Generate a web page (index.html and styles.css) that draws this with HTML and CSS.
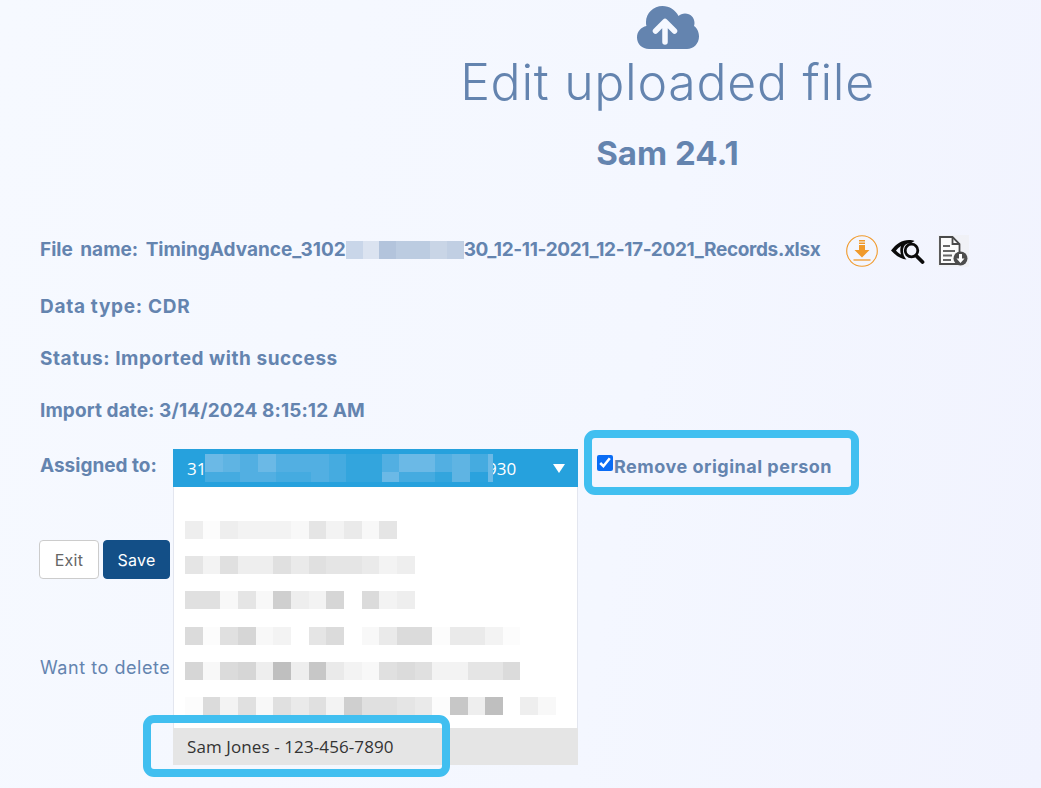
FILE: index.html
```html
<!DOCTYPE html>
<html lang="en">
<head>
<meta charset="utf-8">
<title>Edit uploaded file</title>
<link rel="stylesheet" href="styles.css">
</head>
<body>
<main class="page">
  <header class="head">
    <svg class="cloud" viewBox="0 0 62 46" width="62" height="46" aria-hidden="true">
      <path fill="#6484af" d="M12 44C5 44 0 39 0 32.500C0 26.500 4 22 9.500 21C9 19.500 9 18.500 9 17C9 8 16.500 1 25.500 1C32.500 1 38.500 5 41.500 11C43 9.500 45.500 8.500 48 8.500C53.500 8.500 57.500 12.500 57.500 18C57.500 19 57.300 20 57 21C60 23 62 27 62 31.500C62 38.500 56.500 44 50 44Z"/>
      <path fill="none" stroke="#f5f8ff" stroke-width="5.500" stroke-linecap="round" stroke-linejoin="round" d="M28 37V17.500M18.500 26L28 16.500L37.500 26"/>
    </svg>
    <h1 class="title">Edit uploaded file</h1>
    <h2 class="subtitle">Sam 24.1</h2>
  </header>

  <section class="details">
    <div class="file-row">
      <p class="info"><span class="fit-prefix">File name: TimingAdvance_3102</span><span class="redact"><i class="r1"></i><i class="r2"></i><i class="r3"></i><i class="r4"></i><i class="r4"></i><i class="r5"></i><i class="r6"></i></span><span class="fit-suffix">30_12-11-2021_12-17-2021_Records.xlsx</span></p>
      <div class="file-icons">
        <svg viewBox="0 0 32 32" width="32" height="32" aria-hidden="true">
          <circle cx="16" cy="16" r="15.300" fill="none" stroke="#f09a2c" stroke-width="1.100"/>
          <path fill="#f09a2c" d="M13 5h6v1.500h-6zM13 7.500h6V9h-6zM13 10h6v5h4.500L16 22.500 8.500 15H13z"/>
          <path fill="none" stroke="#f09a2c" stroke-width="1.300" d="M7.500 25h17"/>
        </svg>
        <svg viewBox="0 0 34 26" width="34" height="26" aria-hidden="true">
          <path fill="#0b0b0b" d="M0 12.500C5 6 11 2 18 2C20 2 22 2.300 23.500 3L20 5.200C14 4.500 12 9 12 13C12 16 13 19 15.500 21.500C10 21 5 18 0 12.500ZM5 12.500C6.500 14.200 8 15.500 10 16.500C9 13.500 9 10.500 10 8C8 9.300 6.500 10.800 5 12.500Z"/>
          <circle cx="20.500" cy="12.500" r="6.300" fill="none" stroke="#0b0b0b" stroke-width="2.800"/>
          <path stroke="#0b0b0b" stroke-width="3.800" stroke-linecap="round" d="M25.500 18l6 6"/>
        </svg>
        <svg class="doc" viewBox="0 0 31 32" width="31" height="32" aria-hidden="true">
          <rect width="31" height="32" fill="#f0f1f6"/>
          <path fill="#fbfbfb" stroke="#4a4a4a" stroke-width="1.800" d="M2 2h12.500l7 7v20H2z"/>
          <path fill="none" stroke="#4a4a4a" stroke-width="1.800" d="M14.500 2v7h7"/>
          <path stroke="#666" stroke-width="2.200" d="M5 11h7M5 16h12M5 20.500h9M5 25h8"/>
          <circle cx="22.500" cy="23.500" r="7" fill="#4d4d4d"/>
          <path fill="#fff" d="M21 19h3v4.500h2.500L22.500 28l-4-4.500H21z"/>
        </svg>
      </div>
    </div>
    <p class="info status-data">Data type: CDR</p>
    <p class="info status-state">Status: Imported with success</p>
    <p class="info status-date">Import date: 3/14/2024 8:15:12 AM</p>
  </section>

  <section class="assign-row">
    <p class="info assign-label">Assigned to:</p>
    <div class="select">
      <div class="select-bar">
        <span class="select-start">31</span>
        <span class="select-end">930</span>
        <span class="caret"></span>
        <div class="blur-bar">
          <div class="blur-row tall"><i class="b5"></i><i class="b4"></i><i class="b3"></i><i class="b5"></i><i class="b3"></i><i class="b3"></i><i class="b3"></i><i class="b2"></i><i class="b1"></i><i class="b1"></i><i class="b3"></i><i class="b5"></i><i class="b5"></i><i class="b3"></i><i class="b4"></i><i class="b2"></i><i class="sliver b5"></i></div>
          <div class="blur-row short"><i class="b2"></i><i class="b2"></i><i class="b3"></i><i class="b3"></i><i class="b2"></i><i class="b2"></i><i class="b3"></i><i class="b2"></i><i class="b1"></i><i class="b1"></i><i class="b5"></i><i class="b2"></i><i class="b2"></i><i class="b1"></i><i class="b4"></i><i class="b0"></i><i class="sliver b5"></i></div>
        </div>
      </div>
      <div class="menu">
        <div class="menu-list">
          <div class="blur-line"><i class="g4"></i><i class="g1"></i><i class="g4"></i><i class="g3"></i><i class="g3"></i><i class="g3"></i><i class="g2"></i><i class="g6"></i><i class="g3"></i><i class="g5"></i><i class="g2"></i><i class="g6"></i></div>
          <div class="blur-line"><i class="g6"></i><i class="g3"></i><i class="g7"></i><i class="g4"></i><i class="g4"></i><i class="g7"></i><i class="g5"></i><i class="g7"></i><i class="g6"></i><i class="g6"></i><i class="g5"></i><i class="g3"></i><i class="g4"></i></div>
          <div class="blur-line"><i class="g7"></i><i class="g7"></i><i class="g2"></i><i class="g6"></i><i class="g2"></i><i class="g10"></i><i class="g4"></i><i class="g3"></i><i class="g9"></i><i class="g0"></i><i class="g8"></i><i class="g3"></i><i class="g4"></i></div>
          <div class="blur-line"><i class="g8"></i><i class="g1"></i><i class="g7"></i><i class="g9"></i><i class="g2"></i><i class="g3"></i><i class="g0"></i><i class="g6"></i><i class="g8"></i><i class="g0"></i><i class="g2"></i><i class="g5"></i><i class="g8"></i><i class="g8"></i><i class="g1"></i><i class="g5"></i><i class="g5"></i><i class="g3"></i><i class="g1"></i></div>
          <div class="blur-line"><i class="g9"></i><i class="g2"></i><i class="g8"></i><i class="g9"></i><i class="g4"></i><i class="g12"></i><i class="g4"></i><i class="g11"></i><i class="g5"></i><i class="g3"></i><i class="g2"></i><i class="g7"></i><i class="g8"></i><i class="g7"></i><i class="g3"></i><i class="g3"></i><i class="g6"></i><i class="g6"></i><i class="g8"></i></div>
          <div class="blur-line"><i class="g1"></i><i class="g8"></i><i class="g3"></i><i class="g7"></i><i class="g2"></i><i class="g7"></i><i class="g5"></i><i class="g7"></i><i class="g3"></i><i class="g10"></i><i class="g7"></i><i class="g7"></i><i class="g6"></i><i class="g5"></i><i class="g1"></i><i class="g11"></i><i class="g4"></i><i class="g12"></i><i class="g0"></i><i class="g4"></i><i class="g2"></i></div>
        </div>
        <div class="option">Sam Jones - 123-456-7890</div>
        <div class="option-mark"></div>
      </div>
    </div>
    <label class="remove">
      <input class="remove-check" type="checkbox" checked>
      <span>Remove original person</span>
    </label>
  </section>

  <div class="actions">
    <button class="btn btn-exit" type="button">Exit</button>
    <button class="btn btn-save" type="button">Save</button>
  </div>

  <p class="delete-link">Want to delete this file?</p>
</main>
</body>
</html>
```
FILE: styles.css
```css
* { box-sizing: border-box; }

html, body { height: 100%; }

body {
  margin: 0;
  overflow: hidden;
  background: linear-gradient(100deg, #f6f9ff 0%, #f4f7ff 60%, #f1f3fe 100%);
  color: #6484af;
  font-family: Inter, "Open Sans", sans-serif;
}

.page { padding: 5px 0 0 40px; }

.head {
  display: flex;
  flex-direction: column;
  align-items: center;
  margin-left: 254px;
}

.cloud { display: block; }

.title {
  margin: 0;
  font-size: 50px;
  line-height: 62px;
  font-weight: 300;
  letter-spacing: 0.7px;
}

.subtitle {
  margin: 20px 0 0;
  font-size: 33px;
  line-height: 40px;
  font-weight: 700;
}

.info {
  margin: 0;
  font-size: 19px;
  line-height: 24px;
  font-weight: 700;
  white-space: nowrap;
}

.details { margin-top: 59px; }

.file-row {
  display: flex;
  align-items: center;
  height: 36px;
}

.fit-prefix { word-spacing: 3px; }
.fit-suffix { letter-spacing: -0.35px; }

.redact {
  display: inline-flex;
  width: 118px;
  height: 18px;
  vertical-align: -3px;
}

.redact i { flex: 1; }
.r1 { background: #c9d6e9; }
.r2 { background: #dbe3f0; }
.r3 { background: #b3c4dc; }
.r4 { background: #bccce1; }
.r5 { background: #c9d5e6; }
.r6 { background: #c1cfe3; }

.file-icons {
  display: flex;
  align-items: center;
  gap: 13px;
  margin: 1px 0 0 26px;
}

.status-data { margin-top: 27px; letter-spacing: 0.7px; }
.status-state { margin-top: 28px; letter-spacing: 0.55px; }
.status-date { margin-top: 28px; letter-spacing: 0.1px; }

.assign-row {
  display: flex;
  align-items: flex-start;
  margin-top: 7px;
  height: 65px;
}

.assign-label {
  width: 133px;
  margin-top: 24px;
}

.select {
  position: relative;
  width: 405px;
  margin-top: 19px;
  color: #fff;
}

.select-bar {
  position: relative;
  display: flex;
  align-items: center;
  height: 38px;
  padding: 0 13px 0 14px;
  background: #26a1dd;
  font-family: "Open Sans", sans-serif;
  font-size: 17px;
}

.select-start { width: 290px; }

.select-end { margin-left: 10px; flex: 1; }

.caret {
  width: 0;
  height: 0;
  border-left: 6px solid transparent;
  border-right: 6px solid transparent;
  border-top: 9px solid #fff;
}

.blur-bar {
  position: absolute;
  left: 32px;
  top: 5px;
  width: 288px;
}

.blur-row { display: flex; }
.blur-row i { width: 17.67px; }
.blur-row .sliver { width: 5.6px; }
.tall { height: 18px; }
.short { height: 10px; }

.b0 { background: #2ba2dd; }
.b1 { background: #33a5dd; }
.b2 { background: #45abe0; }
.b3 { background: #52afe2; }
.b4 { background: #5fb4e3; }
.b5 { background: #6bb9e6; }

.menu {
  position: absolute;
  left: 0;
  top: 38px;
  width: 405px;
  z-index: 2;
}

.menu-list {
  display: flex;
  flex-direction: column;
  gap: 17.2px;
  height: 241px;
  padding: 34px 0 0 11px;
  background: #fff;
  border: 1px solid #e3e6ef;
  border-width: 0 1px;
}

.blur-line {
  display: flex;
  height: 18px;
}

.blur-line i { width: 17.67px; }

.g0 { background: #fff; }
.g1 { background: #fcfcfc; }
.g2 { background: #f8f8f8; }
.g3 { background: #f3f3f3; }
.g4 { background: #eeeeee; }
.g5 { background: #eaeaea; }
.g6 { background: #e5e5e5; }
.g7 { background: #e0e0e0; }
.g8 { background: #dbdbdb; }
.g9 { background: #d6d6d6; }
.g10 { background: #cfcfcf; }
.g11 { background: #c7c7c7; }
.g12 { background: #bfbfbf; }

.option {
  display: flex;
  align-items: center;
  height: 37px;
  padding-left: 14px;
  background: #e5e5e5;
  color: #333;
  font-family: "Open Sans", sans-serif;
  font-size: 17px;
  letter-spacing: 0.1px;
}

.option-mark {
  position: absolute;
  left: -30px;
  top: 228px;
  width: 307px;
  height: 62px;
  border: 8px solid #41bff0;
  border-radius: 11px;
  pointer-events: none;
}

.remove {
  display: flex;
  align-items: center;
  width: 275px;
  height: 65px;
  margin-left: 6px;
  padding: 8px 0 0 5px;
  background: #f3f5fe;
  border: 8px solid #41bff0;
  border-radius: 11px;
  font-size: 18px;
  font-weight: 700;
  letter-spacing: 0.5px;
  white-space: nowrap;
}

.remove-check {
  width: 16px;
  height: 16px;
  margin: 0 1px 7px 0;
  accent-color: #0a6cf5;
}

.actions {
  display: flex;
  gap: 4px;
  margin-top: 45px;
  margin-left: -1px;
}

.btn {
  height: 39px;
  padding: 0;
  border-radius: 4px;
  font-family: Inter, sans-serif;
  font-size: 16px;
  letter-spacing: 0.3px;
}

.btn-exit {
  width: 60px;
  background: #fff;
  border: 1px solid #ccc;
  color: #666;
}

.btn-save {
  width: 67px;
  background: #134f87;
  border: 1px solid #134f87;
  color: #fff;
}

.delete-link {
  margin: 77px 0 0;
  font-size: 18px;
  line-height: 24px;
  letter-spacing: 0.55px;
}
```
